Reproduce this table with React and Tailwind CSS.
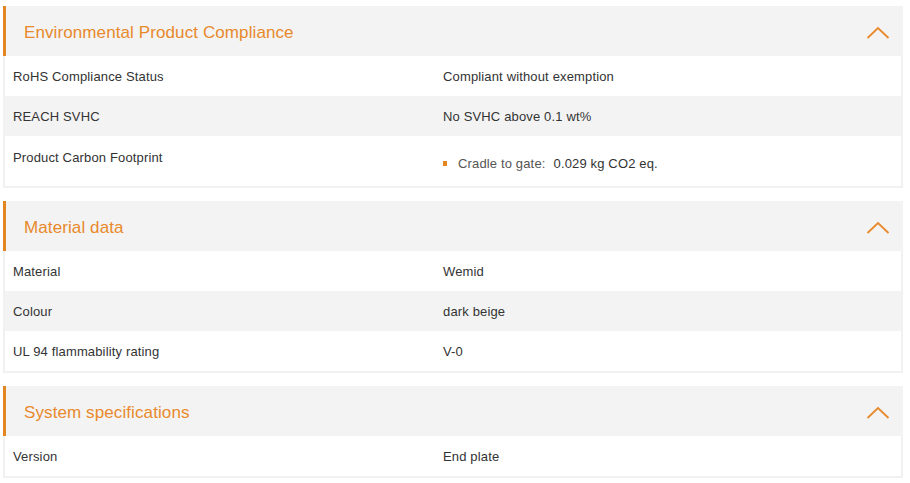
const sections = [
  {
    title: 'Environmental Product Compliance',
    rows: [
      { label: 'RoHS Compliance Status', value: 'Compliant without exemption' },
      { label: 'REACH SVHC', value: 'No SVHC above 0.1 wt%' },
      { label: 'Product Carbon Footprint', list: ['Cradle to gate:', '0.029 kg CO2 eq.'] },
    ],
  },
  {
    title: 'Material data',
    rows: [
      { label: 'Material', value: 'Wemid' },
      { label: 'Colour', value: 'dark beige' },
      { label: 'UL 94 flammability rating', value: 'V-0' },
    ],
  },
  {
    title: 'System specifications',
    rows: [{ label: 'Version', value: 'End plate' }],
  },
];

function Chevron() {
  return (
    <svg width="24" height="13" viewBox="0 0 24 13" fill="none" className="mt-[3px]">
      <path d="M1.5 12 L12 2 L22.5 12" stroke="#e8892c" strokeWidth="1.8" />
    </svg>
  );
}

function Section({ title, rows }) {
  return (
    <div className="mb-[13px]">
      <div className="h-[50px] bg-[#f3f3f3] border-l-[3px] border-[#e38520] flex items-center justify-between pl-[18px] pr-[13px]">
        <h2 className="text-[17px] text-[#e8892c] pt-[3px] tracking-[0.1px]">{title}</h2>
        <Chevron />
      </div>
      <div className="border-2 border-t-0 border-[#f1f1f1]">
        {rows.map((r, i) => (
          <div
            key={r.label}
            className={`flex text-[13px] text-[#333] tracking-[0.15px] ${i % 2 === 1 ? 'bg-[#f3f3f3]' : 'bg-white'} ${r.list ? 'h-[50px] items-start pt-[12px]' : 'h-10 items-center pt-[1px]'}`}
          >
            <div className="w-[438px] pl-[8px]">{r.label}</div>
            {r.list ? (
              <div className="flex items-center mt-[6px]">
                <span className="w-[4px] h-[5px] bg-[#e38520] mr-[11px]"></span>
                <span className="text-[#555]">{r.list[0]}</span>
                <span className="ml-[8px]">{r.list[1]}</span>
              </div>
            ) : (
              <div>{r.value}</div>
            )}
          </div>
        ))}
      </div>
    </div>
  );
}

export default function App() {
  return (
    <div className="w-[910px] h-[483px] bg-white pt-[6px] px-[3px] overflow-hidden" style={{ fontFamily: '"Liberation Sans", Arial, sans-serif' }}>
      <div className="w-[900px]">
        {sections.map((s) => (
          <Section key={s.title} {...s} />
        ))}
      </div>
    </div>
  );
}
